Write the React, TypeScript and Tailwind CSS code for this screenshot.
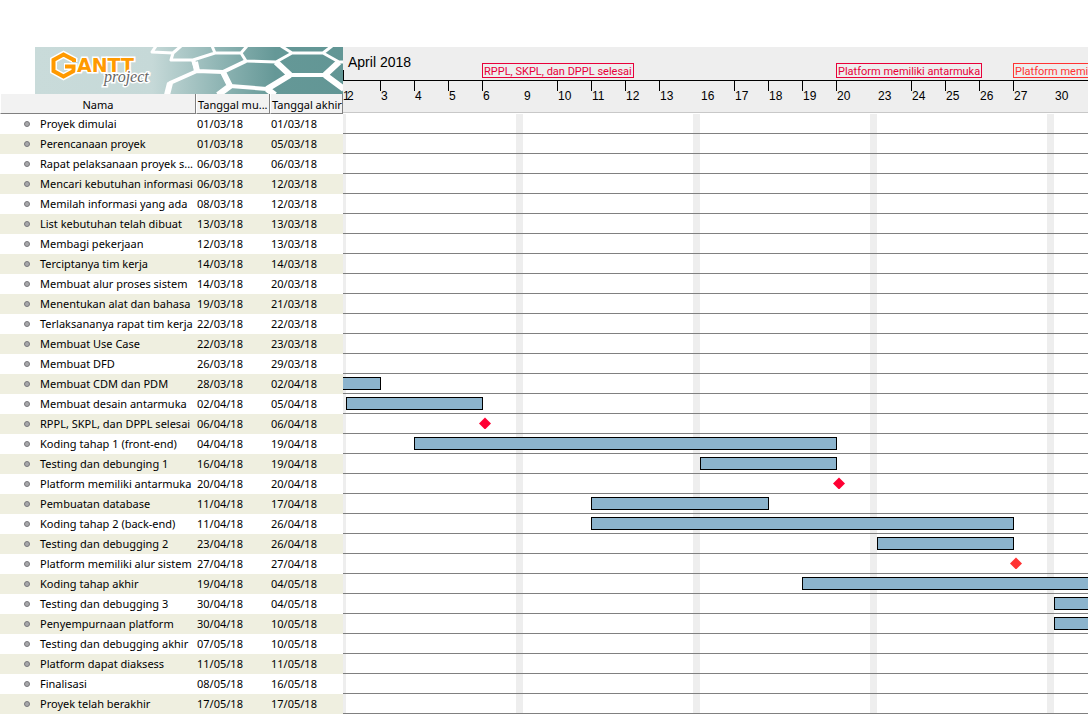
type Task = {
  name: string;
  start: string;
  end: string;
  bar?: [number, number];
  milestone?: { at: number; tone: 'crimson' | 'red' };
};

const tasks: Task[] = [
  { name: 'Proyek dimulai', start: '01/03/18', end: '01/03/18' },
  { name: 'Perencanaan proyek', start: '01/03/18', end: '05/03/18' },
  { name: 'Rapat pelaksanaan proyek s...', start: '06/03/18', end: '06/03/18' },
  { name: 'Mencari kebutuhan informasi', start: '06/03/18', end: '12/03/18' },
  { name: 'Memilah informasi yang ada', start: '08/03/18', end: '12/03/18' },
  { name: 'List kebutuhan telah dibuat', start: '13/03/18', end: '13/03/18' },
  { name: 'Membagi pekerjaan', start: '12/03/18', end: '13/03/18' },
  { name: 'Terciptanya tim kerja', start: '14/03/18', end: '14/03/18' },
  { name: 'Membuat alur proses sistem', start: '14/03/18', end: '20/03/18' },
  { name: 'Menentukan alat dan bahasa', start: '19/03/18', end: '21/03/18' },
  { name: 'Terlaksananya rapat tim kerja', start: '22/03/18', end: '22/03/18' },
  { name: 'Membuat Use Case', start: '22/03/18', end: '23/03/18' },
  { name: 'Membuat DFD', start: '26/03/18', end: '29/03/18' },
  { name: 'Membuat CDM dan PDM', start: '28/03/18', end: '02/04/18', bar: [-3, 3] },
  { name: 'Membuat desain antarmuka', start: '02/04/18', end: '05/04/18', bar: [2, 6] },
  { name: 'RPPL, SKPL, dan DPPL selesai', start: '06/04/18', end: '06/04/18', milestone: { at: 6, tone: 'crimson' } },
  { name: 'Koding tahap 1 (front-end)', start: '04/04/18', end: '19/04/18', bar: [4, 20] },
  { name: 'Testing dan debunging 1', start: '16/04/18', end: '19/04/18', bar: [16, 20] },
  { name: 'Platform memiliki antarmuka', start: '20/04/18', end: '20/04/18', milestone: { at: 20, tone: 'crimson' } },
  { name: 'Pembuatan database', start: '11/04/18', end: '17/04/18', bar: [11, 18] },
  { name: 'Koding tahap 2 (back-end)', start: '11/04/18', end: '26/04/18', bar: [11, 27] },
  { name: 'Testing dan debugging 2', start: '23/04/18', end: '26/04/18', bar: [23, 27] },
  { name: 'Platform memiliki alur sistem', start: '27/04/18', end: '27/04/18', milestone: { at: 27, tone: 'red' } },
  { name: 'Koding tahap akhir', start: '19/04/18', end: '04/05/18', bar: [19, 35] },
  { name: 'Testing dan debugging 3', start: '30/04/18', end: '04/05/18', bar: [30, 35] },
  { name: 'Penyempurnaan platform', start: '30/04/18', end: '10/05/18', bar: [30, 41] },
  { name: 'Testing dan debugging akhir', start: '07/05/18', end: '10/05/18' },
  { name: 'Platform dapat diaksess', start: '11/05/18', end: '11/05/18' },
  { name: 'Finalisasi', start: '08/05/18', end: '16/05/18' },
  { name: 'Proyek telah berakhir', start: '17/05/18', end: '17/05/18' },
];

const DAY = 34;
const WEEKEND = 7;
const LEAD = 3;

// Days are counted from 1 April 2018; Monday 2 April opens the first full week.
function dayX(day: number) {
  const offset = day - 2;
  const week = Math.floor(offset / 7);
  const weekday = offset - week * 7;
  return LEAD + week * (DAY * 5 + WEEKEND) + Math.min(weekday, 5) * DAY;
}

const weeks = [[2, 3, 4, 5, 6], [9, 10, 11, 12, 13], [16, 17, 18, 19, 20], [23, 24, 25, 26, 27], [30]];

const deadlines = [
  { label: 'RPPL, SKPL, dan DPPL selesai', day: 6, style: 'border-[#e8003a] text-[#e8003a]' },
  { label: 'Platform memiliki antarmuka', day: 20, style: 'border-[#e8003a] text-[#e8003a]' },
  { label: 'Platform memiliki alur sistem', day: 27, style: 'border-[#ff3333] text-[#ff3333]' },
];

function Logo() {
  return (
    <svg viewBox="0 0 308 47" className="ml-[35px] block h-[47px] w-[308px]" role="img" aria-label="GanttProject">
      <defs>
        <linearGradient id="sea" x1="0" x2="1" y1="0" y2="0">
          <stop offset="0" stopColor="#c9dbda" />
          <stop offset="0.38" stopColor="#c6d9d8" />
          <stop offset="0.6" stopColor="#8fb5b4" />
          <stop offset="0.78" stopColor="#659897" />
          <stop offset="1" stopColor="#629695" />
        </linearGradient>
      </defs>
      <rect width="308" height="47" fill="url(#sea)" />
      <g fill="none" stroke="#fff" strokeLinejoin="round">
        <path
          strokeWidth="3"
          d="M121 -1L117 5L138 6L146 -1M138 6L136 13L158 13L180 6L177 -1M180 6L206 6L212 -1M206 6L211 14L241 15L257 6L246 -1M257 6L288 6L297 -1M288 6L304 15L309 15"
        />
        <path
          strokeWidth="4"
          d="M158 13L162 24L188 25L211 14M241 15L255 28L290 28L304 15M188 25L195 39L232 42L255 28M162 24L135 36L132 48"
        />
        <path
          strokeWidth="6"
          d="M162 24L160 15M188 25L195 39L183 48M232 42L240 48M241 15L255 28M290 28L309 42M255 28L232 42M290 28L304 15M135 36L132 48"
        />
      </g>
      <g fill="none" strokeLinejoin="miter">
        <path stroke="#fff" strokeWidth="7" d="M39 15V13L28.500 7.500L18.500 13V24L28.500 29.500L39 24V19.500H29" />
        <path stroke="#ff9a00" strokeWidth="4" d="M39 15V13L28.500 7.500L18.500 13V24L28.500 29.500L38.500 24V19.500H30" />
      </g>
      <text
        x="42"
        y="25"
        fontSize="19"
        className="font-['DejaVu_Sans'] font-bold"
        fill="#ff9a00"
        stroke="#fff"
        strokeWidth="3"
        paintOrder="stroke"
      >
        ANTT
      </text>
      <text
        x="69"
        y="35"
        fontSize="16"
        className="font-['Liberation_Serif'] italic"
        fill="#666"
        stroke="#fff"
        strokeWidth="3"
        paintOrder="stroke"
      >
        project
      </text>
    </svg>
  );
}

const headCell =
  'border-r border-b border-l border-r-[#808080] border-b-[#808080] border-l-white p-0 pt-[3px] font-normal whitespace-nowrap leading-4';

function TaskTable() {
  return (
    <table className="w-full table-fixed border-separate border-spacing-0 text-left font-['Noto_Sans',sans-serif] text-[11px] leading-5 text-black">
      <colgroup>
        <col className="w-[196px]" />
        <col className="w-[74px]" />
        <col />
      </colgroup>
      <thead>
        <tr className="h-5 bg-[#f2f2f2]">
          <th className={`${headCell} text-center`}>Nama</th>
          <th className={`${headCell} indent-px`}>Tanggal mu...</th>
          <th className={`${headCell} indent-px`}>Tanggal akhir</th>
        </tr>
      </thead>
      <tbody>
        {tasks.map((task) => (
          <tr key={task.name} className="h-5 even:bg-[#efefe0]">
            <td className="p-0">
              <div className="flex items-center pl-6 whitespace-nowrap">
                <span className="mr-[10px] size-1.5 shrink-0 rounded-full border border-[#77777b] bg-[#a8a8aa]" />
                {task.name}
              </div>
            </td>
            <td className="p-0 pl-px">{task.start}</td>
            <td className="p-0 pl-px">{task.end}</td>
          </tr>
        ))}
      </tbody>
    </table>
  );
}

function TimelineHeader() {
  return (
    <header className="h-[66px] border-b border-[#c8c8c8] bg-[#eeeeee] text-black">
      <div className="relative h-[34px] border-b border-black">
        <h1 className="pt-[7px] pl-[5px] text-[14px] leading-4">April 2018</h1>
        <span className="absolute bottom-0 left-0 h-2.5 w-px bg-black" />
        {deadlines.map((item) => (
          <span
            key={item.label}
            className={`absolute bottom-[2px] h-[15px] border px-px pt-px font-['Roboto',sans-serif] text-[11px] leading-[13px] whitespace-nowrap ${item.style}`}
            style={{ left: dayX(item.day) }}
          >
            {item.label}
          </span>
        ))}
      </div>
      <div className="relative flex pl-[3px] text-[12px] leading-3">
        <span className="absolute top-[9px] left-0">1</span>
        {weeks.map((days) => (
          <div key={days[0]} className="mr-[7px] flex">
            {days.map((day, i) => (
              <span key={day} className={`h-2.5 w-[34px] shrink-0 ${i === 0 ? 'pl-px' : 'border-l border-black'}`}>
                <span className="block pt-[9px]">{day}</span>
              </span>
            ))}
          </div>
        ))}
      </div>
    </header>
  );
}

function Chart() {
  return (
    <div className="relative">
      <div className="absolute inset-0 flex">
        <span className="w-[3px] shrink-0 bg-[#eeeeee]" />
        {weeks.map((days) => (
          <span key={days[0]} className="w-[177px] shrink-0 border-r-[7px] border-[#eeeeee]" />
        ))}
      </div>
      {tasks.map((task) => (
        <div key={task.name} className="relative h-5 border-b border-[#808080] pt-[3px]">
          {task.bar && (
            <div
              className="h-[13px] border border-black bg-[#8cb4cd]"
              style={{
                marginLeft: dayX(task.bar[0]),
                width: dayX(task.bar[1]) - dayX(task.bar[0]) + 1,
              }}
            />
          )}
          {task.milestone && (
            <svg
              viewBox="0 0 12 12"
              className={`block size-3 ${task.milestone.tone === 'red' ? 'fill-[#ff3333]' : 'fill-[#ff0033]'}`}
              style={{ marginLeft: dayX(task.milestone.at) - 3 }}
            >
              <path d="M6 0.500L12 6.500L6 12.500L0 6.500Z" />
            </svg>
          )}
        </div>
      ))}
    </div>
  );
}

export default function App() {
  return (
    <main className="flex min-h-screen bg-white pt-[47px] font-['Liberation_Sans',sans-serif]">
      <section className="w-[343px] shrink-0">
        <Logo />
        <TaskTable />
      </section>
      <section className="min-w-0 flex-1 overflow-hidden">
        <TimelineHeader />
        <div className="border-t border-transparent" />
        <Chart />
      </section>
    </main>
  );
}
